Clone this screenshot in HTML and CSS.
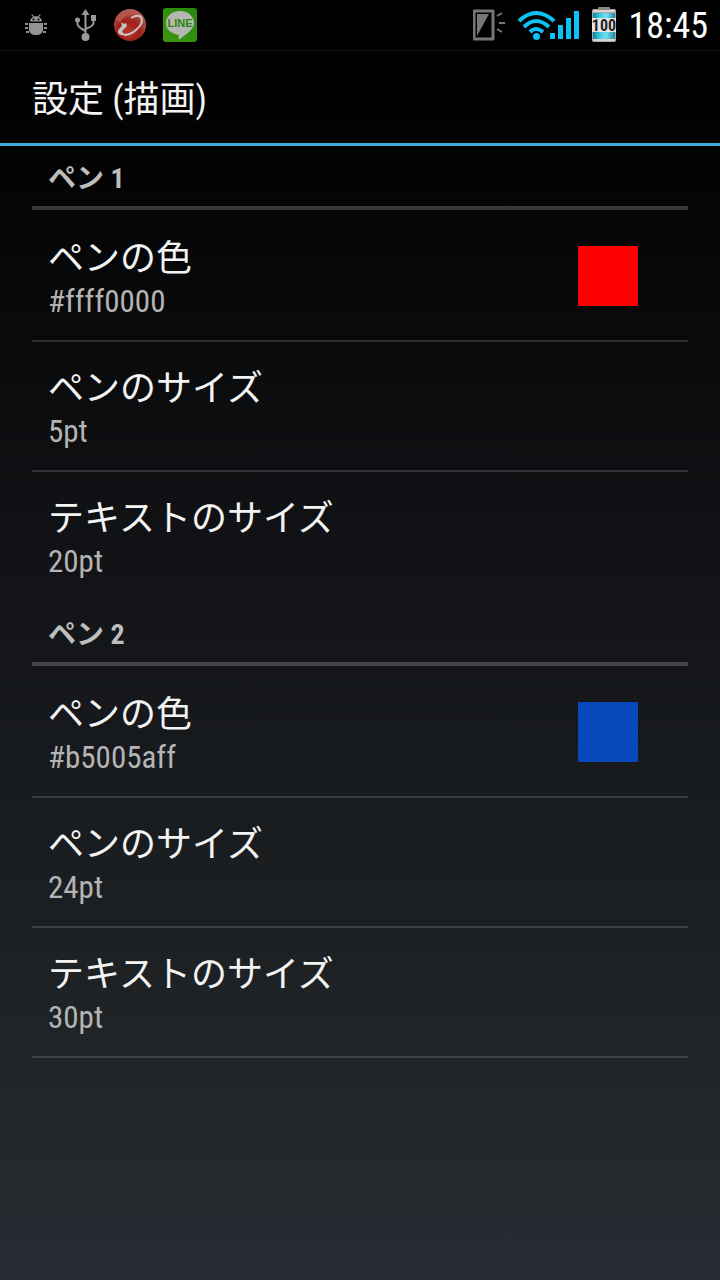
FILE: index.html
```
<!DOCTYPE html>
<html lang="ja">
<head>
    <meta charset="utf-8">
    <meta name="viewport" content="width=device-width">
    <title>設定 (描画)</title>
    <link rel="stylesheet" href="styles.css">
</head>
<body>
    <div class="status-bar">
        <div class="notifications">
            <svg width="22" height="22" viewBox="0 0 22 22" fill="#939393">
                <path d="M5 7.500a6 6 0 0 1 3-4.500L6.200.8l.9-.7L9 2.400a7 7 0 0 1 4 0L14.900.1l.9.7L14 3a6 6 0 0 1 3 4.500z"/>
                <path d="M4 9h14v6q0 5-5 6H9q-5-1-5-6z"/>
                <path d="M0 9h3v2H0zM0 13h3v2H0zM1 17h3v2H1zM19 9h3v2h-3zM19 13h3v2h-3zM18 17h3v2h-3z"/>
                <circle cx="8.500" cy="5.500" r="1" fill="#000"/>
                <circle cx="13.500" cy="5.500" r="1" fill="#000"/>
            </svg>
            <svg width="22" height="34" viewBox="0 0 22 34" fill="none" stroke="#999" stroke-width="2">
                <path d="M10.500 28V5M2.500 12v4q0 3 8 7M18.500 10v5q0 3-8 6"/>
                <path d="M10.500 1l4 6h-8zM16 7h5v6h-5z" fill="#999" stroke="none"/>
                <circle cx="2.500" cy="12" r="2.500" fill="#999" stroke="none"/>
                <circle cx="10.500" cy="29" r="4" fill="#999" stroke="none"/>
            </svg>
            <svg width="34" height="34" viewBox="0 0 34 34">
                <defs>
                    <radialGradient id="ball" cx="45%" cy="70%" r="70%">
                        <stop offset="0" stop-color="#b8382e"/>
                        <stop offset=".5" stop-color="#a01f18"/>
                        <stop offset="1" stop-color="#ad6b64"/>
                    </radialGradient>
                </defs>
                <circle cx="17" cy="17" r="16" fill="url(#ball)"/>
                <path d="M3 11Q8 2 17 2q7 0 11 5-6-2-12 0-7 3-9 7-2-1-4-3z" fill="#b4554b"/>
                <path d="M18 10Q25 6 28 9q3 6-4 12-6 6-13 6" fill="none" stroke="#c9c3c1" stroke-width="2"/>
                <path d="M14 27q-5 1-8-1-2-2 0-5l3-3-1-4 3 2 2-1 1 3-2 2q-4 3-2 5 1 1 4 1z" fill="#c9c3c1"/>
            </svg>
            <svg width="34" height="34" viewBox="0 0 34 34">
                <defs>
                    <linearGradient id="line" x1="0" y1="1" x2="1" y2="0">
                        <stop offset="0" stop-color="#3d9710"/>
                        <stop offset="1" stop-color="#28860b"/>
                    </linearGradient>
                </defs>
                <rect width="34" height="34" rx="3" fill="url(#line)"/>
                <path d="M17 3c8 0 14 5 14 12 0 6-6 10-14 16-1 1-2 0-1-4C8 26 3 21 3 15 3 8 9 3 17 3z" fill="#b5b8b2"/>
                <text class="line-label" x="17" y="19" text-anchor="middle">LINE</text>
            </svg>
        </div>
        <div class="system">
            <svg width="32" height="34" viewBox="1 0 32 34">
                <path d="M2 3h19v28H2z" fill="none" stroke="#777" stroke-width="3" stroke-linejoin="round"/>
                <path d="M5 6h12L5 28z" fill="#777"/>
                <path d="M25 8l5-3M27 15h6M25 21l5 3" fill="none" stroke="#777" stroke-width="2"/>
            </svg>
            <svg width="62" height="32" viewBox="0 0 62 32">
                <g fill="none" stroke="#0bc1f5" stroke-width="4">
                    <path d="M2 12q17-16 35 0M7 18q12-12 25 0M13 23q6-6 13 0"/>
                </g>
                <circle cx="19.500" cy="27.500" r="3.500" fill="#0bc1f5"/>
                <path d="M33 24h5v6h-5zM41 16h5v14h-5zM49 9h5v21h-5zM57 2h5v28h-5z" fill="#0bc1f5"/>
            </svg>
            <svg width="26" height="36" viewBox="0 0 26 36">
                <defs>
                    <linearGradient id="cell">
                        <stop offset="0" stop-color="#12819b"/>
                        <stop offset=".3" stop-color="#3bcae3"/>
                        <stop offset=".6" stop-color="#79deed"/>
                        <stop offset="1" stop-color="#168ba7"/>
                    </linearGradient>
                </defs>
                <rect x="1" y="2" width="24" height="33" rx="2" fill="#aaa"/>
                <rect x="7" y="0" width="12" height="3" rx="1" fill="#8d8584"/>
                <rect x="2" y="6" width="22" height="26" fill="url(#cell)"/>
                <path d="M2 4h22M2 33h22" stroke="#d8d4d2" stroke-width="2"/>
                <rect x="1" y="11" width="24" height="14" fill="#e6e6e6"/>
                <text class="battery-label" x="13" y="24" text-anchor="middle">100</text>
            </svg>
            <span class="clock">18:45</span>
        </div>
    </div>

    <header class="title-bar">
        <h1>設定 (描画)</h1>
    </header>

    <main class="settings">
        <section>
            <h2>ペン 1</h2>
            <ul>
                <li><button type="button" class="row">
                    <span class="label"><span class="name">ペンの色</span><span class="value">#ffff0000</span></span>
                    <span class="swatch red"></span>
                </button></li>
                <li><button type="button" class="row">
                    <span class="label"><span class="name">ペンのサイズ</span><span class="value">5pt</span></span>
                </button></li>
                <li><button type="button" class="row">
                    <span class="label"><span class="name">テキストのサイズ</span><span class="value">20pt</span></span>
                </button></li>
            </ul>
        </section>
        <section>
            <h2>ペン 2</h2>
            <ul>
                <li><button type="button" class="row">
                    <span class="label"><span class="name">ペンの色</span><span class="value">#b5005aff</span></span>
                    <span class="swatch blue"></span>
                </button></li>
                <li><button type="button" class="row">
                    <span class="label"><span class="name">ペンのサイズ</span><span class="value">24pt</span></span>
                </button></li>
                <li><button type="button" class="row">
                    <span class="label"><span class="name">テキストのサイズ</span><span class="value">30pt</span></span>
                </button></li>
            </ul>
        </section>
    </main>
</body>
</html>
```
FILE: styles.css
```
* {
    box-sizing: border-box;
}
body {
    margin: 0;
    min-height: 100vh;
    background: linear-gradient(#000 0, #020203 10%, #131518 48%, #24282b 90%, #282b34 100%);
    color: #f3f3f3;
    font-family: "Roboto Condensed", "Liberation Sans Narrow", "Noto Sans CJK JP", sans-serif;
}
svg {
    display: block;
}
.status-bar {
    display: flex;
    justify-content: space-between;
    align-items: center;
    height: 51px;
    padding: 0 12px 0 25px;
    background: #000;
    border-bottom: 1px solid #111;
}
.notifications {
    display: flex;
    align-items: center;
    gap: 16px;
}
.notifications svg:first-child {
    margin-right: 12px;
}
.system {
    display: flex;
    align-items: center;
    gap: 12px;
}
.line-label {
    font: bold 11px "Liberation Sans", sans-serif;
    fill: #28860b;
}
.battery-label {
    font: bold 16px "Roboto Condensed", "Liberation Sans Narrow", "Noto Sans CJK JP", sans-serif;
    fill: #222;
}
.clock {
    font-size: 36px;
    line-height: 50px;
    padding-top: 2px;
    color: #fff;
}
.title-bar {
    height: 95px;
    padding: 0 32px;
    border-bottom: 3px solid #41addb;
}
.title-bar h1 {
    margin: 0;
    font-size: 36px;
    font-weight: normal;
    line-height: 98px;
}
.settings {
    padding: 0 32px;
}
.settings h2 {
    height: 64px;
    margin: 0;
    padding-left: 16px;
    border-bottom: 4px solid rgba(255, 255, 255, 0.2);
    color: #bebebe;
    font-size: 28px;
    font-weight: bold;
    line-height: 66px;
}
.settings ul {
    list-style: none;
    margin: 0;
    padding: 2px 0 0;
}
.settings li {
    border-bottom: 2px solid rgba(255, 255, 255, 0.15);
}
.settings section:first-child li:last-child {
    border-color: transparent;
}
.row {
    display: flex;
    align-items: center;
    justify-content: space-between;
    width: 100%;
    height: 128px;
    padding: 0 50px 0 16px;
    border: none;
    background: none;
    color: inherit;
    font-family: inherit;
    text-align: left;
}
.label {
    display: flex;
    flex-direction: column;
    padding-top: 3px;
}
.name {
    font-size: 36px;
    line-height: 48px;
}
.value {
    color: #b4b4b4;
    font-size: 31px;
    line-height: 38px;
}
.swatch {
    width: 60px;
    height: 60px;
}
.red {
    background: #f00;
}
.blue {
    background: #0748bc;
}
```
